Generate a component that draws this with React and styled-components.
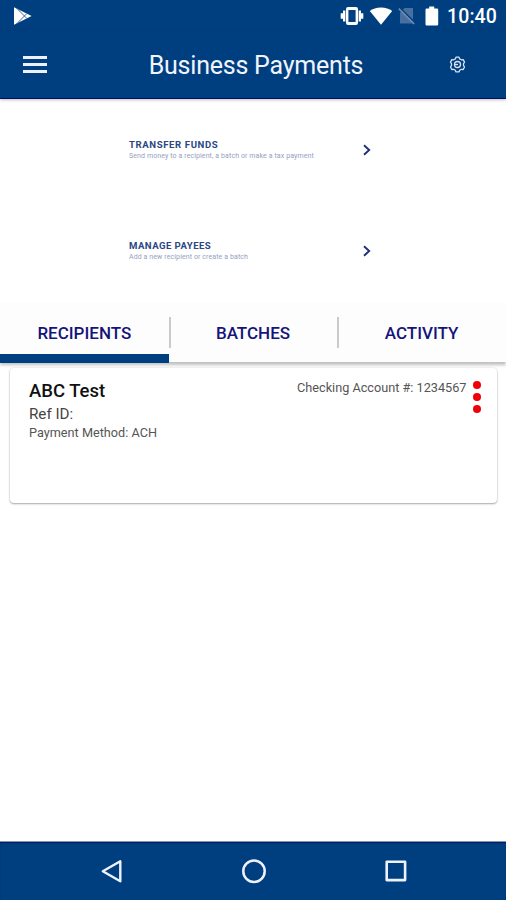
import React from "react";
import styled, { createGlobalStyle } from "styled-components";

const NAVY = "#003f7f";
const INK = "#14147a";

export default function App() {
  return (
    <Screen>
      <GlobalStyle />
      <StatusBar>
        <PlayIcon />
        <StatusIcons>
          <VibrateIcon />
          <WifiIcon />
          <NoSimIcon />
          <BatteryIcon />
          <Clock>10:40</Clock>
        </StatusIcons>
      </StatusBar>
      <AppBar>
        <MenuButton aria-label="Menu">
          <MenuLine />
          <MenuLine />
          <MenuLine />
        </MenuButton>
        <Title>Business Payments</Title>
        <GearIcon />
      </AppBar>
      <Options>
        <Option
          title="TRANSFER FUNDS"
          text="Send money to a recipient, a batch or make a tax payment"
          titleSpacing="0.6px"
        />
        <Option
          title="MANAGE PAYEES"
          text="Add a new recipient or create a batch"
          titleSpacing="0.45px"
        />
      </Options>
      <Tabs>
        <Tab $active>RECIPIENTS</Tab>
        <Tab $divided>BATCHES</Tab>
        <Tab $divided>ACTIVITY</Tab>
      </Tabs>
      <Content>
        <Card>
          <CardInfo>
            <Name>ABC Test</Name>
            <RefId>Ref ID:</RefId>
            <Method>Payment Method: ACH</Method>
          </CardInfo>
          <Account>Checking Account #: 1234567</Account>
          <MoreButton aria-label="More">
            <Dot />
            <Dot />
            <Dot />
          </MoreButton>
        </Card>
      </Content>
      <NavBar>
        <svg width="24" height="26" viewBox="0 0 24 26" fill="none" stroke="#eef1ff" strokeWidth="2.4" strokeLinejoin="round">
          <path d="M20.3 3.3v20L2.8 13.3z" />
        </svg>
        <svg width="26" height="26" viewBox="0 0 26 26" fill="none" stroke="#eef1ff" strokeWidth="2.5">
          <circle cx="13" cy="13.2" r="10.7" />
        </svg>
        <svg width="24" height="26" viewBox="0 0 24 26" fill="none" stroke="#eef1ff" strokeWidth="2.6" strokeLinejoin="round">
          <rect x="2.7" y="3.7" width="18.4" height="18.4" />
        </svg>
      </NavBar>
    </Screen>
  );
}

function Option({ title, text, titleSpacing }) {
  return (
    <OptionRow>
      <OptionText>
        <OptionTitle $spacing={titleSpacing}>{title}</OptionTitle>
        <OptionSub>{text}</OptionSub>
      </OptionText>
      <svg width="10" height="14" viewBox="0 0 10 14" fill="none" stroke="#1d2f7d" strokeWidth="1.9">
        <path d="M2 2.2 7.2 7 2 11.8" />
      </svg>
    </OptionRow>
  );
}

function PlayIcon() {
  return (
    <svg width="19" height="20" viewBox="0 0 19 20">
      <path d="M1 1.2 18.6 10 1 18.8z" fill="#fff" />
      <path d="M3.5 2 14 12.6M3.5 18 14 7.4" stroke="#3f6797" strokeWidth="1" fill="none" />
    </svg>
  );
}

function VibrateIcon() {
  return (
    <svg width="24" height="18" viewBox="0 0 24 18" fill="#fff">
      <path fillRule="evenodd" d="M8 0h8a2 2 0 0 1 2 2v14a2 2 0 0 1-2 2H8a2 2 0 0 1-2-2V2a2 2 0 0 1 2-2zm.4 3v12h7.200V3z" />
      <path d="M3 3.500h2.400v11H3zM.7 6.300h2.400v5.400H.7zM18.600 3.500H21v11h-2.400zM20.900 6.300h2.400v5.400h-2.400z" />
    </svg>
  );
}

function WifiIcon() {
  return (
    <svg width="24" height="18" viewBox="0 0 24 18" fill="#fff">
      <path d="M12 17.800.8 4C3.700 1.700 7.500.4 12 .4s8.300 1.300 11.200 3.600z" />
    </svg>
  );
}

function NoSimIcon() {
  return (
    <svg width="18" height="18" viewBox="0 0 18 18">
      <path d="M6.500 1H15v15.500H2V5.400z" fill="#476f9f" />
      <path d="M1.800 0.8 17.400 16" stroke={NAVY} strokeWidth="1.600" />
      <path d="M.8 1.600 16.200 17" stroke="#6d8db5" strokeWidth="1.500" />
    </svg>
  );
}

function BatteryIcon() {
  return (
    <svg width="14" height="20" viewBox="0 0 14 20" fill="#fff">
      <path d="M4.200.5h5v2H12a1.200 1.200 0 0 1 1.200 1.200v14.600a1.200 1.200 0 0 1-1.200 1.200H1.700a1.200 1.200 0 0 1-1.200-1.200V3.700a1.200 1.200 0 0 1 1.200-1.200h2.500z" />
    </svg>
  );
}

function GearIcon() {
  return (
    <svg width="17" height="17" viewBox="0 0 17 17" fill="none" stroke="#d5e2f4" strokeWidth="1.3" strokeLinejoin="round">
      <path d="M7 1.200h3l.7 1.700 1.600.9 1.900-.2 1.300 2.500-1 1.600v1.700l1 1.600-1.300 2.500-1.900-.2-1.600.9-.7 1.700H7l-.7-1.700-1.600-.9-1.900.2-1.300-2.500 1-1.600V7.700l-1-1.600 1.300-2.500 1.900.2 1.600-.9z" />
      <circle cx="8.500" cy="8.500" r="3" />
      <path d="M5.600 8.500h3.400" />
    </svg>
  );
}

const GlobalStyle = createGlobalStyle`
  * {
    box-sizing: border-box;
  }
  body {
    margin: 0;
    background: #fff;
    font-family: Roboto, sans-serif;
  }
  svg {
    display: block;
    flex: none;
  }
`;

const Screen = styled.div`
  display: flex;
  flex-direction: column;
  width: 506px;
  height: 900px;
  overflow: hidden;
  background: #fff;
`;
const StatusBar = styled.div`
  display: flex;
  justify-content: space-between;
  align-items: center;
  height: 31px;
  flex: none;
  padding: 0 9px 0 13px;
  background: ${NAVY};
`;
const StatusIcons = styled.div`
  display: flex;
  align-items: center;
  gap: 5px;
  > svg:nth-of-type(3) {
    margin-right: 4px;
  }
`;
const Clock = styled.span`
  margin-left: 3px;
  color: #fff;
  font-size: 19.5px;
  font-weight: 500;
  line-height: 29px;
  padding-top: 2px;
  letter-spacing: 0.1px;
`;
const AppBar = styled.header`
  display: grid;
  grid-template-columns: 126px 1fr 126px;
  align-items: center;
  height: 68px;
  flex: none;
  background: ${NAVY};
  border-bottom: 1px solid #00106a;
  box-shadow: 0 1px 3px rgba(0, 0, 0, 0.25);
  > svg {
    margin-left: 69px;
  }
`;
const MenuButton = styled.button`
  display: flex;
  flex-direction: column;
  gap: 3.5px;
  width: 24px;
  margin-left: 23px;
  padding: 0;
  border: 0;
  background: none;
`;
const MenuLine = styled.span`
  height: 3.5px;
  background: #eef0ff;
`;
const Title = styled.h1`
  margin: 2px 0 0 6px;
  color: #f1f4ff;
  font-size: 25px;
  font-weight: 400;
  line-height: 32px;
  letter-spacing: -0.22px;
  text-align: center;
  white-space: nowrap;
`;
const Options = styled.section`
  height: 204px;
  flex: none;
`;
const OptionRow = styled.div`
  display: flex;
  align-items: center;
  justify-content: space-between;
  height: 101px;
  padding: 1px 134px 0 129px;
`;
const OptionText = styled.div`
  padding-top: 1px;
  white-space: nowrap;
`;
const OptionTitle = styled.div`
  color: #2b4784;
  font-size: 9.6px;
  font-weight: 700;
  line-height: 12px;
  letter-spacing: ${(props) => props.$spacing};
`;
const OptionSub = styled.div`
  color: #96a0bf;
  font-size: 7px;
  line-height: 11px;
  letter-spacing: 0.1px;
`;
const Tabs = styled.nav`
  display: grid;
  grid-template-columns: repeat(3, 1fr);
  position: relative;
  height: 59px;
  flex: none;
  background: #fdfdfd;
  box-shadow: 0 3px 3px rgba(0, 0, 0, 0.25);
`;
const Tab = styled.div`
  position: relative;
  height: 59px;
  color: ${INK};
  font-size: 17px;
  font-weight: 500;
  line-height: 61px;
  text-align: center;
  &::before {
    content: "";
    display: ${(props) => (props.$divided ? "block" : "none")};
    position: absolute;
    left: 0;
    top: 14px;
    width: 2px;
    height: 31px;
    background: #c9cacd;
  }
  &::after {
    content: "";
    display: ${(props) => (props.$active ? "block" : "none")};
    position: absolute;
    left: 0;
    right: 0;
    bottom: -1px;
    height: 9px;
    background: ${NAVY};
  }
`;
const Content = styled.main`
  flex: 1;
  padding: 6px 9px 0 10px;
`;
const Card = styled.article`
  display: flex;
  height: 135px;
  padding: 12px 16px 0 19px;
  background: #fff;
  border-radius: 4px;
  box-shadow: 0 1px 2px rgba(0, 0, 0, 0.32), 0 0 2px rgba(0, 0, 0, 0.12);
`;
const CardInfo = styled.div`
  flex: 1;
`;
const Name = styled.div`
  color: #111;
  font-size: 18.5px;
  font-weight: 500;
  line-height: 22px;
`;
const RefId = styled.div`
  color: #444;
  font-size: 15.2px;
  line-height: 24px;
`;
const Method = styled.div`
  color: #555;
  font-size: 12.7px;
  line-height: 14px;
`;
const Account = styled.div`
  margin-top: -1px;
  color: #555;
  font-size: 12.7px;
  line-height: 17px;
`;
const MoreButton = styled.button`
  display: flex;
  flex-direction: column;
  gap: 4px;
  margin: 1px 0 0 6.5px;
  padding: 0;
  border: 0;
  background: none;
`;
const Dot = styled.span`
  width: 8px;
  height: 8px;
  border-radius: 50%;
  background: #f00008;
`;
const NavBar = styled.footer`
  display: flex;
  justify-content: space-between;
  align-items: center;
  height: 59px;
  flex: none;
  padding: 0 98px 0 100px;
  background: ${NAVY};
  border-top: 1px solid #8b93a6;
  box-shadow: inset 0 1px 1px #001b66;
`;
